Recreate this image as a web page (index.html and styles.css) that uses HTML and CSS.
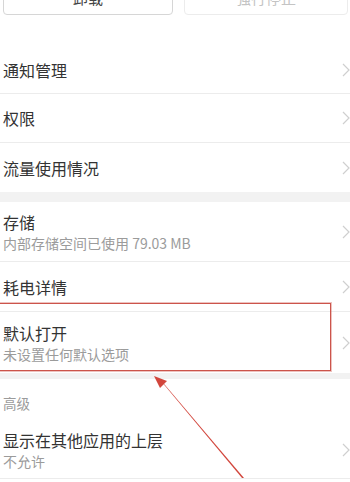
FILE: index.html
```html
<!DOCTYPE html>
<html lang="zh-CN">
<head>
<meta charset="utf-8">
<link rel="stylesheet" href="styles.css">
</head>
<body>
<div class="page">
  <div class="actions">
    <div class="btn">卸载</div>
    <div class="btn disabled">强行停止</div>
  </div>
  <div class="list">
    <div class="row single first"><span class="title">通知管理</span><svg class="chev" width="8" height="14" viewBox="0 0 8 14"><polyline points="1,1 7,7 1,13" fill="none" stroke="#cfcfcf" stroke-width="1.2"/></svg></div>
    <div class="row single"><span class="title">权限</span><svg class="chev" width="8" height="14" viewBox="0 0 8 14"><polyline points="1,1 7,7 1,13" fill="none" stroke="#cfcfcf" stroke-width="1.2"/></svg></div>
    <div class="row single last"><span class="title">流量使用情况</span><svg class="chev" width="8" height="14" viewBox="0 0 8 14"><polyline points="1,1 7,7 1,13" fill="none" stroke="#cfcfcf" stroke-width="1.2"/></svg></div>
    <div class="band"></div>
    <div class="row double storage"><div class="texts"><span class="title">存储</span><span class="sub">内部存储空间已使用 79.03 MB</span></div><svg class="chev" width="8" height="14" viewBox="0 0 8 14"><polyline points="1,1 7,7 1,13" fill="none" stroke="#cfcfcf" stroke-width="1.2"/></svg></div>
    <div class="row single power"><span class="title">耗电详情</span><svg class="chev" width="8" height="14" viewBox="0 0 8 14"><polyline points="1,1 7,7 1,13" fill="none" stroke="#cfcfcf" stroke-width="1.2"/></svg></div>
    <div class="row double default last"><div class="texts"><span class="title">默认打开</span><span class="sub">未设置任何默认选项</span></div><svg class="chev" width="8" height="14" viewBox="0 0 8 14"><polyline points="1,1 7,7 1,13" fill="none" stroke="#cfcfcf" stroke-width="1.2"/></svg></div>
    <div class="band small"></div>
    <div class="header">高级</div>
    <div class="row double overlay"><div class="texts"><span class="title">显示在其他应用的上层</span><span class="sub">不允许</span></div><svg class="chev" width="8" height="14" viewBox="0 0 8 14"><polyline points="1,1 7,7 1,13" fill="none" stroke="#cfcfcf" stroke-width="1.2"/></svg></div>
  </div>
  <div class="highlight"></div>
  <svg class="arrow" width="350" height="482" viewBox="0 0 350 482">
    <polygon points="154,376 167,381 160,388" fill="#d2463c"/>
    <polygon points="161,381 165,385 244,478 242,478" fill="#d2463c"/>
  </svg>
</div>
</body>
</html>
```
FILE: styles.css
```css
html, body {
  margin: 0;
  padding: 0;
  background: #fff;
}
.page {
  position: relative;
  width: 350px;
  height: 482px;
  overflow: hidden;
  font-family: "Noto Sans CJK SC", "Noto Sans", sans-serif;
  color: #333;
}
.actions {
  display: flex;
  gap: 11px;
  padding: 0 2px 0 3px;
  margin-top: -20px;
}
.btn {
  flex: 0 0 168px;
  height: 33px;
  border: 1px solid #d6d6d6;
  border-radius: 4px;
  display: flex;
  align-items: center;
  justify-content: center;
  font-size: 15px;
  color: #444;
}
.btn.disabled {
  flex: 1;
  border-color: #ececec;
  color: #c4c4c4;
}
.list {
  margin-top: 31px;
}
.row {
  display: flex;
  align-items: center;
  justify-content: space-between;
  padding-left: 3px;
  padding-right: 0;
  border-bottom: 1px solid #ececec;
  box-sizing: border-box;
}
.row.single { height: 49px; }
.row.first { height: 48px; }
.row.last { border-bottom: none; }
.row.storage { height: 60px; }
.row.power { height: 50px; }
.row.default { height: 61px; }
.row.overlay { height: 58px; }
.title {
  font-size: 16px;
  line-height: 20px;
  color: #333;
}
.texts {
  display: flex;
  flex-direction: column;
  gap: 2px;
}
.sub {
  font-size: 14px;
  line-height: 18px;
  color: #9b9b9b;
}
.chev {
  flex: none;
  display: block;
}
.band {
  height: 10px;
  background: #f2f2f2;
}
.band.small {
  height: 6px;
}
.header {
  height: 42px;
  display: flex;
  align-items: center;
  padding-left: 3px;
  padding-top: 6px;
  box-sizing: border-box;
  font-size: 13.5px;
  color: #9b9b9b;
}
.highlight {
  position: absolute;
  left: -1px;
  top: 303px;
  width: 332px;
  height: 68px;
  box-sizing: border-box;
  border: 1px solid #cc544b;
  box-shadow: 0 0 0 1px rgba(214, 120, 112, 0.45);
}
.arrow {
  position: absolute;
  left: 0;
  top: 0;
}
```
